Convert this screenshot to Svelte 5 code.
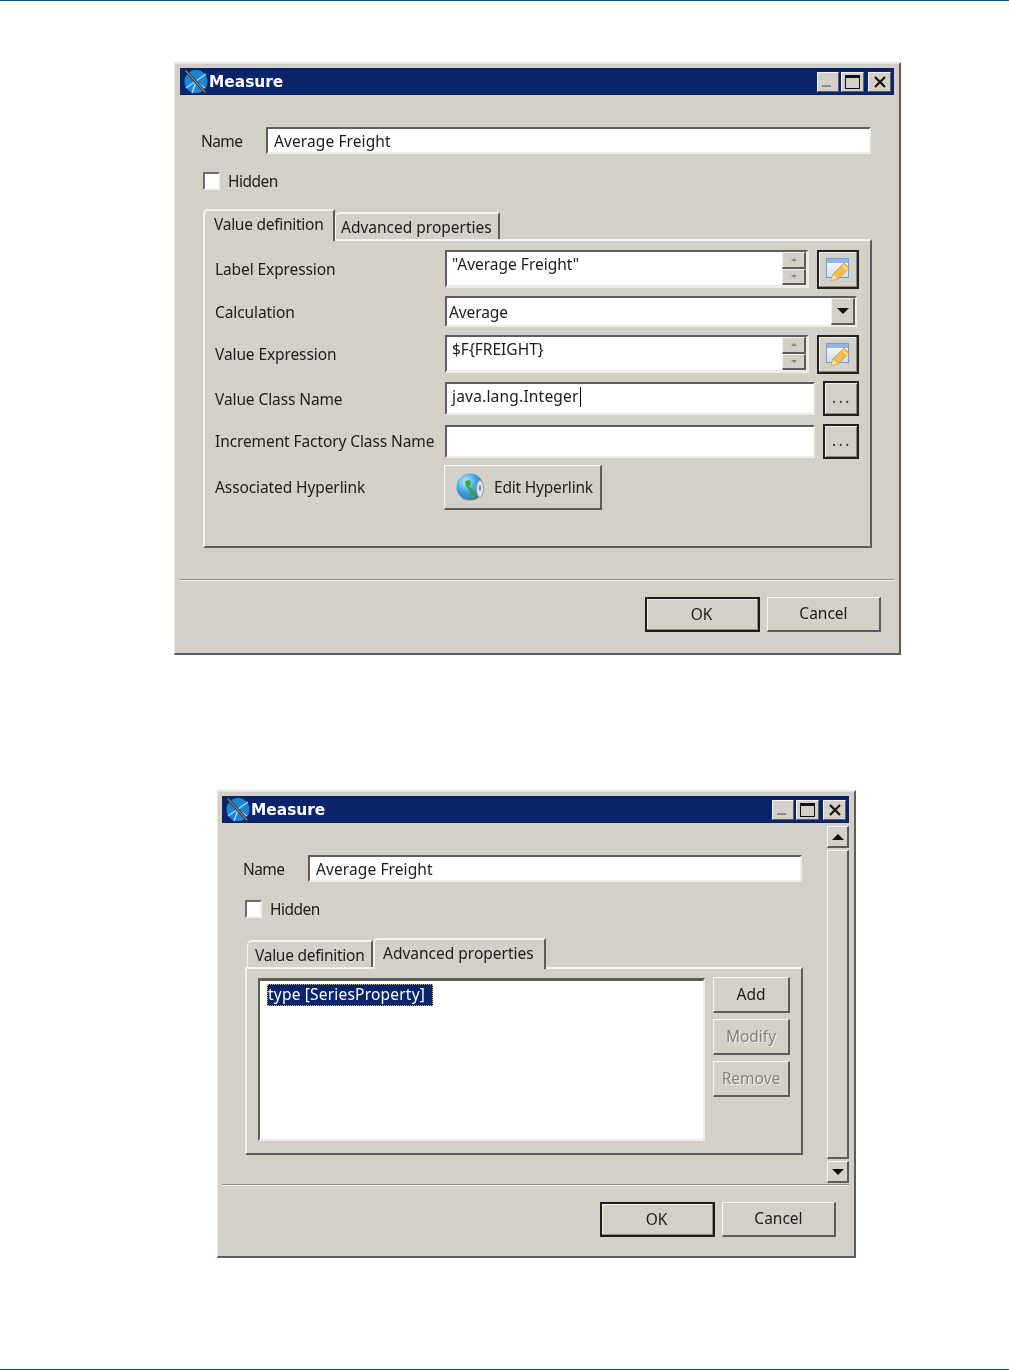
<script>
  const sideButtons = [
    { label: 'Add', disabled: false },
    { label: 'Modify', disabled: true },
    { label: 'Remove', disabled: true },
  ];
</script>

{#snippet appIcon()}
  <svg class="app-icon" viewBox="0 0 25 25" aria-hidden="true">
    <circle cx="13" cy="12.5" r="11.5" fill="#1c86d6" />
    <path d="M3 19 L13 12 L23 5 M9 24 L13 13 L22 19" stroke="#a8d8f7" stroke-width="1.5" fill="none" />
    <path d="M2 1 L23 24" stroke="#3a3a3a" stroke-width="3" />
    <path d="M3 2 L22 23" stroke="#b4b4b4" stroke-width="0.9" />
  </svg>
{/snippet}

{#snippet titleBar()}
  <div class="titlebar">
    {@render appIcon()}
    <span class="title">Measure</span>
    <div class="caption-buttons">
      <span class="cap cap-min"><i></i></span>
      <span class="cap cap-max"><i></i></span>
      <span class="cap cap-close">
        <svg viewBox="0 0 14 12" width="14" height="12" aria-hidden="true">
          <path d="M2 1 L12 11 M12 1 L2 11" stroke="#111" stroke-width="2.2" />
        </svg>
      </span>
    </div>
  </div>
{/snippet}

{#snippet editIcon()}
  <svg viewBox="0 0 26 24" width="26" height="24" aria-hidden="true">
    <defs>
      <linearGradient id="pane" x1="0" y1="0" x2="0" y2="1">
        <stop offset="0" stop-color="#ffffff" />
        <stop offset="1" stop-color="#c9dcf7" />
      </linearGradient>
    </defs>
    <rect x="1.5" y="1.5" width="22" height="19" fill="url(#pane)" stroke="#6f9be0" />
    <rect x="2" y="2" width="21" height="4" fill="#8fb6ea" />
    <path d="M6 23.5 L8 17 L19 6 L24.5 11 L13 22 Z" fill="#f4bd4c" stroke="#c48c30" stroke-width="0.7" />
    <path d="M8 17 L13 22 L6 23.5 Z" fill="#f5dfb0" stroke="#c9a468" stroke-width="0.5" />
    <path d="M17.5 8 L22.5 13" stroke="#f9e4a8" stroke-width="1.6" />
  </svg>
{/snippet}

{#snippet globeIcon()}
  <svg viewBox="0 0 30 30" width="30" height="30" aria-hidden="true">
    <defs>
      <radialGradient id="globe" cx="0.35" cy="0.3" r="0.75">
        <stop offset="0" stop-color="#b8ecf8" />
        <stop offset="0.5" stop-color="#3fa6e4" />
        <stop offset="1" stop-color="#2a72c4" />
      </radialGradient>
    </defs>
    <circle cx="14" cy="15" r="13.5" fill="url(#globe)" />
    <path d="M9 9 L14 8 L15 12 L13 14 L17 18 L20 26 L16 25 L13 18 L10 14 Z" fill="#37a83a" />
    <path d="M6 27 Q14 30 22 27" stroke="#d6a868" stroke-width="1.2" fill="none" />
    <ellipse cx="24" cy="17" rx="3.4" ry="8.5" fill="#dfe2e6" stroke="#9aa0a7" />
    <ellipse cx="24" cy="16" rx="1.1" ry="3" fill="#7f858c" />
  </svg>
{/snippet}

{#snippet spinField(value)}
  <div class="spin sunken">
    <span class="spin-text">{value}</span>
    <div class="spin-buttons">
      <span class="spin-btn"><i class="tri-up"></i></span>
      <span class="spin-btn"><i class="tri-down"></i></span>
    </div>
  </div>
  <button class="icon-btn" type="button" aria-label="Edit expression">{@render editIcon()}</button>
{/snippet}

{#snippet nameRows(inputWidth)}
  <div class="name-row">
    <span class="name-label">Name</span>
    <div class="text-input sunken" style="width: {inputWidth}px">Average Freight</div>
  </div>
  <div class="hidden-row">
    <span class="checkbox"></span>
    <span class="hidden-label">Hidden</span>
  </div>
{/snippet}

{#snippet footerButtons()}
  <div class="separator"></div>
  <div class="footer">
    <button class="btn btn-default" type="button">OK</button>
    <button class="btn" type="button">Cancel</button>
  </div>
{/snippet}

<div class="page">
  <div class="rule"></div>

  <section class="window window-a">
    {@render titleBar()}
    <div class="content">
      {@render nameRows(605)}
      <div class="tab-area">
        <div class="tabs">
          <span class="tab tab-value active">Value definition</span>
          <span class="tab tab-advanced">Advanced properties</span>
        </div>
        <div class="panel panel-a">
          <div class="form">
            <span>Label Expression</span>
            <div class="cell">{@render spinField('"Average Freight"')}</div>

            <span>Calculation</span>
            <div class="select sunken">
              <span class="select-text">Average</span>
              <span class="select-arrow"><i class="tri-down big"></i></span>
            </div>

            <span>Value Expression</span>
            <div class="cell">{@render spinField('$F{FREIGHT}')}</div>

            <span>Value Class Name</span>
            <div class="cell class-cell">
              <div class="class-input sunken">java.lang.Integer<i class="caret"></i></div>
              <button class="dots" type="button">...</button>
            </div>

            <span>Increment Factory Class Name</span>
            <div class="cell class-cell">
              <div class="class-input sunken"></div>
              <button class="dots" type="button">...</button>
            </div>

            <span class="link-label">Associated Hyperlink</span>
            <div class="cell">
              <button class="link-btn" type="button">{@render globeIcon()}<span>Edit Hyperlink</span></button>
            </div>
          </div>
        </div>
      </div>
    </div>
    {@render footerButtons()}
  </section>

  <section class="window window-b">
    {@render titleBar()}
    <div class="scroll-wrap">
      <div class="content">
        {@render nameRows(494)}
        <div class="tab-area">
          <div class="tabs">
            <span class="tab tab-value">Value definition</span>
            <span class="tab tab-advanced active">Advanced properties</span>
          </div>
          <div class="panel panel-b">
            <div class="list sunken">
              <span class="list-item">type [SeriesProperty]</span>
            </div>
            <div class="side-buttons">
              {#each sideButtons as b}
                <button class="btn side" class:disabled={b.disabled} type="button">{b.label}</button>
              {/each}
            </div>
          </div>
        </div>
      </div>
      <div class="scrollbar">
        <span class="scroll-btn"><i class="tri-up big"></i></span>
        <span class="scroll-track"></span>
        <span class="scroll-btn down"><i class="tri-down big"></i></span>
      </div>
    </div>
    {@render footerButtons()}
  </section>

  <div class="rule bottom"></div>
</div>

<style>
  :global(body) {
    background: #fff;
  }

  .page {
    display: flex;
    flex-direction: column;
    height: 1370px;
    font-family: "Noto Sans", "DejaVu Sans", sans-serif;
    font-size: 15.5px;
    color: #1c1c1c;
  }

  .rule {
    height: 1px;
    flex: none;
    background: #005b8f;
  }

  .rule.bottom {
    margin-top: 111px;
    background: #0b5a85;
  }

  .window {
    flex: none;
    box-sizing: border-box;
    display: flex;
    flex-direction: column;
    background: #d4d0c8;
    border-style: solid;
    border-width: 2px 2px 2px 1px;
    border-color: #e9e7e1 #5c5c5c #5c5c5c #e9e7e1;
    filter: blur(0.35px);
  }

  .window-a {
    width: 727px;
    height: 593px;
    margin: 61px 0 0 174px;
    padding: 4px 5px 0 5px;
  }

  .window-b {
    width: 639px;
    height: 468px;
    margin: 135px 0 0 217px;
    padding: 4px 5px 0 4px;
  }

  .titlebar {
    flex: none;
    display: flex;
    align-items: center;
    height: 27px;
    background: #0a246a;
    color: #fff;
  }

  .app-icon {
    width: 25px;
    height: 25px;
    margin: 0 1px 0 3px;
  }

  .title {
    font-family: "DejaVu Sans", sans-serif;
    font-weight: 700;
    font-size: 15.4px;
  }

  .caption-buttons {
    margin-left: auto;
    margin-right: 3px;
    display: flex;
  }

  .cap {
    box-sizing: border-box;
    width: 23px;
    height: 20px;
    display: flex;
    align-items: center;
    justify-content: center;
    background: #d4d0c8;
    border: 1px solid;
    border-color: #f4f3ef #5f5f5f #5f5f5f #f4f3ef;
  }

  .cap-min {
    width: 22px;
    margin-right: 2px;
  }

  .cap-max {
    margin-right: 4px;
  }

  .cap-min i {
    width: 9px;
    height: 2px;
    margin-top: 9px;
    margin-right: 3px;
    background: #8e8c86;
  }

  .cap-max i {
    box-sizing: border-box;
    width: 15px;
    height: 14px;
    border: 1px solid #111;
    border-top-width: 3px;
  }

  .sunken {
    box-sizing: border-box;
    background: #fff;
    border-style: solid;
    border-width: 2px;
    border-color: #5e5e5e #ecebe5 #ecebe5 #5e5e5e;
  }

  .name-row {
    display: flex;
    align-items: center;
    margin: 32px 0 0 21px;
    height: 27px;
  }

  .name-label {
    width: 65px;
    letter-spacing: -0.6px;
  }

  .hidden-label {
    letter-spacing: -0.5px;
  }

  .text-input {
    height: 27px;
    line-height: 24px;
    padding-left: 6px;
    letter-spacing: 0.1px;
  }

  .hidden-row {
    display: flex;
    align-items: center;
    gap: 8px;
    height: 18px;
    margin: 18px 0 0 23px;
  }

  .checkbox {
    box-sizing: border-box;
    width: 17px;
    height: 18px;
    background: #fff;
    border-style: solid;
    border-width: 2px;
    border-color: #6b6b6b #f1f0ec #f1f0ec #6b6b6b;
  }

  .tab-area {
    margin: 19px 0 0 23px;
  }

  .tabs {
    display: flex;
    align-items: flex-end;
    position: relative;
    z-index: 1;
    margin-bottom: -2px;
    height: 32px;
  }

  .tab {
    box-sizing: border-box;
    height: 27px;
    margin-bottom: 2px;
    padding: 2px 0 0 7px;
    line-height: 22px;
    background: #d4d0c8;
    border-style: solid;
    border-width: 2px 2px 0 1px;
    border-color: #f1f0ec #5c5c5c #f1f0ec #f1f0ec;
    border-top-left-radius: 5px;
  }

  .tab-value {
    letter-spacing: -0.27px;
    width: 126px;
  }

  .tab-advanced {
    width: 165px;
    padding-left: 5px;
  }

  .window-b .tab-value {
    margin-left: 2px;
  }

  .tab.active {
    height: 31px;
    margin-bottom: 0;
    border-width: 2px 2px 0 2px;
    position: relative;
  }

  .tab-value.active {
    width: 132px;
    height: 32px;
    padding-left: 9px;
  }

  .tab-advanced.active {
    width: 173px;
    padding-left: 8px;
  }

  .panel {
    box-sizing: border-box;
    border-style: solid;
    border-width: 2px;
    border-color: #f1f0ec #5c5c5c #5c5c5c #f1f0ec;
  }

  .panel-a {
    width: 669px;
    height: 309px;
    padding: 9px 11px 0 10px;
  }

  .form {
    display: grid;
    grid-template-columns: 230px 414px;
    grid-template-rows: 38px 31px 38px 35px 34px 44px;
    row-gap: 8px;
    align-items: center;
    letter-spacing: -0.1px;
  }

  .link-label {
    margin-top: -2px;
  }

  .cell {
    display: flex;
    align-items: center;
    gap: 8px;
    height: 100%;
    letter-spacing: 0;
  }

  .spin {
    flex: none;
    width: 364px;
    height: 38px;
    display: flex;
    border-right-width: 3px;
    border-bottom-width: 3px;
  }

  .spin-text {
    flex: 1;
    padding: 0 0 0 5px;
    line-height: 25px;
  }

  .spin-buttons {
    display: flex;
    flex-direction: column;
    width: 24px;
  }

  .spin-btn {
    flex: 1;
    display: flex;
    align-items: center;
    justify-content: center;
    background: #d4d0c8;
    border-style: solid;
    border-width: 1px 2px 2px 1px;
    border-color: #f1f0ec #5c5c5c #5c5c5c #f1f0ec;
  }

  i {
    display: block;
  }

  .tri-up {
    width: 0;
    height: 0;
    border: 3px solid transparent;
    border-top-width: 0;
    border-bottom: 3px solid #85837e;
  }

  .tri-down {
    width: 0;
    height: 0;
    border: 3px solid transparent;
    border-bottom-width: 0;
    border-top: 3px solid #85837e;
  }

  .tri-up.big {
    border-width: 0 6px 6px 6px;
    border-bottom-color: #111;
  }

  .tri-down.big {
    border-width: 6px 6px 0 6px;
    border-top-color: #111;
  }

  .icon-btn {
    flex: none;
    box-sizing: border-box;
    width: 42px;
    height: 39px;
    padding: 0;
    display: flex;
    align-items: center;
    justify-content: center;
    background: #d4d0c8;
    border: 2px solid #222;
    box-shadow: inset -1px -1px 0 #8b8983, inset 1px 1px 0 #f1f0ec;
  }

  .select {
    height: 31px;
    width: 412px;
    display: flex;
    align-items: center;
    justify-content: space-between;
    padding-left: 2px;
  }

  .select-arrow {
    box-sizing: border-box;
    width: 24px;
    height: 100%;
    display: flex;
    align-items: center;
    justify-content: center;
    background: #d4d0c8;
    border-style: solid;
    border-width: 1px 2px 2px 1px;
    border-color: #f1f0ec #5c5c5c #5c5c5c #f1f0ec;
  }

  .class-input {
    flex: none;
    width: 370px;
    height: 33px;
    padding-left: 5px;
    line-height: 25px;
    letter-spacing: 0.2px;
    display: flex;
    align-items: flex-start;
  }

  .caret {
    width: 1px;
    height: 20px;
    margin: 3px 0 0 1px;
    background: #000;
  }

  .dots {
    flex: none;
    box-sizing: border-box;
    width: 36px;
    height: 35px;
    padding: 0 0 3px 2px;
    font: inherit;
    letter-spacing: 2.5px;
    color: #333;
    background: #d4d0c8;
    border: 2px solid #222;
    box-shadow: inset 1px 1px 0 #f1f0ec, inset -1px -1px 0 #8b8983;
  }

  .link-btn {
    box-sizing: border-box;
    flex: none;
    width: 158px;
    height: 45px;
    margin: -1px 0 0 -1px;
    padding: 0 0 0 11px;
    display: flex;
    align-items: center;
    gap: 8px;
    font: inherit;
    letter-spacing: -0.2px;
    color: inherit;
    background: #d4d0c8;
    border-style: solid;
    border-width: 1px 2px 2px 1px;
    border-color: #f4f3ef #5c5c5c #5c5c5c #f4f3ef;
  }

  .separator {
    flex: none;
    height: 1px;
    background: #8f8c85;
    border-bottom: 1px solid #f1f0ec;
  }

  .window-a .separator {
    margin-top: 31px;
  }

  .footer {
    display: flex;
    justify-content: flex-end;
    gap: 7px;
    margin-top: 16px;
    padding-right: 13px;
  }

  .btn {
    box-sizing: border-box;
    width: 114px;
    height: 35px;
    padding: 0 0 2px;
    font: inherit;
    color: inherit;
    background: #d4d0c8;
    border-style: solid;
    border-width: 1px 2px 2px 1px;
    border-color: #f4f3ef #5c5c5c #5c5c5c #f4f3ef;
  }

  .btn-default {
    width: 115px;
    padding-right: 2px;
    border: 2px solid #1c1c1c;
    box-shadow: inset -1px -1px 0 #8b8983, inset 1px 1px 0 #f1f0ec;
  }

  .scroll-wrap {
    flex: none;
    display: flex;
    height: 361px;
  }

  .scroll-wrap .content {
    width: 605px;
  }

  .scrollbar {
    display: flex;
    flex-direction: column;
    width: 22px;
    margin: 3px 0 1px;
    gap: 2px;
  }

  .scroll-btn {
    box-sizing: border-box;
    flex: none;
    height: 22px;
    display: flex;
    align-items: center;
    justify-content: center;
    background: #d4d0c8;
    border-style: solid;
    border-width: 1px 2px 2px 1px;
    border-color: #f4f3ef #5c5c5c #5c5c5c #f4f3ef;
  }

  .scroll-track {
    flex: 1;
    box-sizing: border-box;
    background: #d4d0c8;
    border-style: solid;
    border-width: 1px 2px 2px 1px;
    border-color: #f4f3ef #5c5c5c #5c5c5c #f4f3ef;
  }

  .panel-b {
    width: 558px;
    height: 188px;
    padding: 9px 0 0 11px;
    display: flex;
    gap: 8px;
  }

  .list {
    flex: none;
    width: 447px;
    height: 163px;
    padding: 2px 0 0 7px;
    border-width: 3px 2px 2px 2px;
  }

  .list-item {
    display: inline-block;
    box-sizing: border-box;
    width: 166px;
    height: 22px;
    padding: 0 1px;
    line-height: 21px;
    letter-spacing: 0.2px;
    background: #0a246a;
    color: #fff;
    outline: 1px dotted #c9b36a;
    outline-offset: -1px;
  }

  .side-buttons {
    display: flex;
    flex-direction: column;
    gap: 6px;
    margin-top: -1px;
  }

  .btn.side {
    width: 77px;
    height: 36px;
  }

  .btn.side.disabled {
    color: #85837d;
    text-shadow: 1px 1px 0 #f1f0ec;
  }
</style>
